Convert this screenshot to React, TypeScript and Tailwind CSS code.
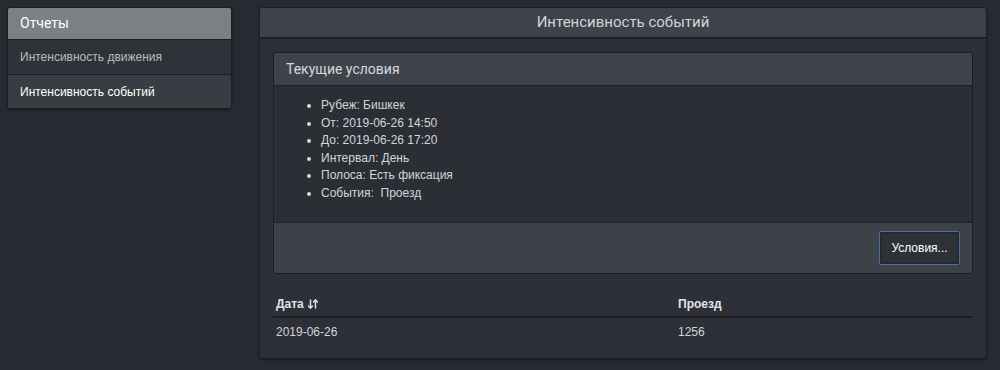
import React from 'react';
import { ArrowDownUp } from 'lucide-react';

const conditions = [
  'Рубеж: Бишкек',
  'От: 2019-06-26 14:50',
  'До: 2019-06-26 17:20',
  'Интервал: День',
  'Полоса: Есть фиксация',
  'События:  Проезд',
];

export default function App() {
  return (
    <div
      className="w-[1000px] h-[370px] bg-[#272a31] flex gap-[27px] p-[7px] pr-[13px]"
      style={{ fontFamily: '"Liberation Sans", Arial, sans-serif' }}
    >
      {/* sidebar */}
      <div className="w-[225px] self-start rounded-[3px] overflow-hidden border border-[#1c1e23] shadow-[0_1px_2px_rgba(0,0,0,0.4)]">
        <div className="h-[31px] bg-[#7c8085] flex items-center px-[12px] text-[14px] text-white font-['Roboto',sans-serif]">
          Отчеты
        </div>
        <div className="h-[35px] bg-[#2f3238] border-t border-[#1c1e23] flex items-center px-[12px] text-[12px] text-[#b9bbbe]">
          Интенсивность движения
        </div>
        <div className="h-[34px] bg-[#383c43] border-t border-[#1c1e23] flex items-center px-[12px] text-[12px] text-white">
          Интенсивность событий
        </div>
      </div>

      {/* main panel */}
      <div className="flex-1 h-[352px] rounded-[3px] border border-[#1c1e23] bg-[#2d3038] flex flex-col shadow-[0_1px_2px_rgba(0,0,0,0.4)]">
        <div className="h-[31px] bg-[#3e434b] border-b-2 border-[#1f2126] flex items-center justify-center text-[15px] text-[#d2d3d5] font-['Roboto',sans-serif] rounded-t-[3px]">
          Интенсивность событий
        </div>
        <div className="px-[13px] pt-[13px]">
          <div className="rounded-[3px] border border-[#1c1e23] overflow-hidden">
            <div className="h-[33px] bg-[#3f444c] border-b border-[#1f2126] flex items-center px-[12px] text-[14px] text-[#d8d9da] font-['Roboto',sans-serif]">
              Текущие условия
            </div>
            <div className="h-[137px] bg-[#2b2e35] border-b border-[#1f2126] pt-[11px]">
              <ul className="list-disc pl-[47px] text-[12px] leading-[17.5px] text-[#d4d5d7] marker:text-[#d4d5d7]">
                {conditions.map((c) => (
                  <li key={c} className="whitespace-pre">{c}</li>
                ))}
              </ul>
            </div>
            <div className="h-[50px] bg-[#3d4148] flex items-center justify-end pr-[12px]">
              <button className="w-[81px] h-[34px] rounded-[2px] border border-[#4a6ea8] bg-[#2e3136] text-[12px] text-white shadow-[inset_0_0_3px_rgba(0,0,0,0.6)]">
                Условия...
              </button>
            </div>
          </div>
        </div>
        <div className="px-[13px] pt-[17px]">
          <div className="flex h-[27px] items-center border-b-2 border-[#1c1e23] text-[12px] font-bold text-[#e2e3e4]">
            <div className="w-[405px] pl-[3px] flex items-center gap-[3px]">
              Дата
              <ArrowDownUp size={12} strokeWidth={3} className="text-[#e2e3e4]" />
            </div>
            <div>Проезд</div>
          </div>
          <div className="flex h-[27px] items-center text-[12px] text-[#d4d5d7]">
            <div className="w-[405px] pl-[3px]">2019-06-26</div>
            <div>1256</div>
          </div>
        </div>
      </div>
    </div>
  );
}
